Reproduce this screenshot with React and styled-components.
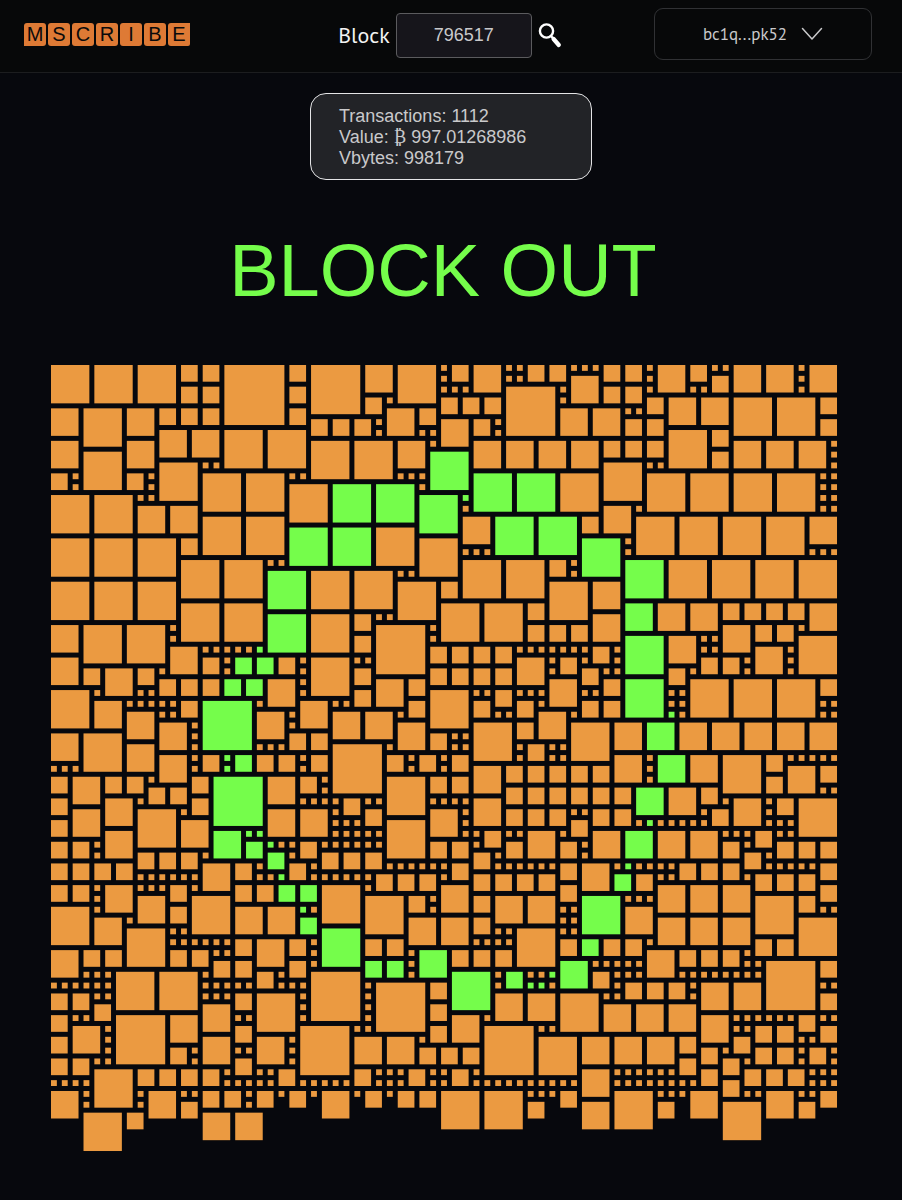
import React from "react";
import styled, { createGlobalStyle } from "styled-components";

const GlobalStyle = createGlobalStyle`
  *, *::before, *::after { box-sizing: border-box; }
  body {
    margin: 0;
    background: #07080d;
    color: #c9c9cb;
    font-family: "Liberation Sans", Arial, sans-serif;
  }
`;

const Page = styled.div`
  min-height: 100vh;
  padding-bottom: 40px;
`;

const Header = styled.header`
  display: grid;
  grid-template-columns: 1fr auto 1fr;
  align-items: center;
  padding: 8px 30px 12px 24px;
  background: #070809;
  border-bottom: 1px solid #1c1d1f;
`;

const Logo = styled.a`
  display: flex;
  gap: 2px;
  justify-self: start;
  text-decoration: none;
`;

const Tile = styled.span`
  display: flex;
  align-items: center;
  justify-content: center;
  width: 22px;
  height: 23px;
  border-radius: ${(p) => p.$corners || "3px"};
  background: #de7a35;
  color: #0a0a0b;
  font-size: 20px;
  line-height: 23px;
`;

const Search = styled.form`
  display: flex;
  align-items: center;
  gap: 6px;
  padding: 2px 0 0 4px;
`;

const SearchLabel = styled.label`
  color: #f2f2f2;
  font-family: "PT Sans", "Noto Sans", sans-serif;
  font-size: 22px;
  line-height: 28px;
`;

const BlockInput = styled.input`
  width: 136px;
  height: 45px;
  padding: 0;
  border: 1px solid #5b5b5e;
  border-radius: 4px;
  background: #16151b;
  color: #c9c9cb;
  font-family: inherit;
  font-size: 18px;
  text-align: center;
`;

const IconButton = styled.button`
  display: flex;
  padding: 0;
  border: 0;
  background: none;
  color: #fff;
  cursor: pointer;
`;

const Wallet = styled.button`
  display: flex;
  align-items: center;
  justify-content: center;
  gap: 14px;
  justify-self: end;
  width: 218px;
  height: 52px;
  border: 1px solid #303134;
  border-radius: 9px;
  background: transparent;
  color: #c9c9cb;
  font-family: "PT Sans", "Noto Sans", sans-serif;
  font-size: 17px;
  cursor: pointer;
`;

const Stats = styled.section`
  width: 282px;
  margin: 20px auto 0;
  padding: 12px 28px 10px;
  border: 1px solid #e4e4e6;
  border-radius: 16px;
  background: #222327;
  font-size: 18px;
  line-height: 21px;
`;

const StatLine = styled.p`
  margin: 0;
`;

const Coin = styled.span`
  font-family: "Liberation Serif", serif;
`;

const Title = styled.h1`
  margin: 49px 0 52px;
  padding-right: 16px;
  color: #75fd4b;
  font-size: 74px;
  font-weight: 400;
  line-height: 84px;
  text-align: center;
`;

const Field = styled.main`
  padding: 0 60px 0 51px;
`;

const Mosaic = styled.svg`
  display: block;
  width: 100%;
`;

const Cell = styled.rect`
  fill: ${(p) => (p.$lit ? "#75fd4b" : "#eb9a41")};
`;

const COLUMNS = 73;
const GAP = 0.46;

// One string per grid row: the sizes of the squares that start in that row,
// taken left to right over the cells still free. Letters a-e are lit squares
// of size 1-5, a dot is an empty cell.
const ROWS = [
  "4442262 5341231122 11122132113313",
  "1113121",
  "22211151221111",
  "212221233442",
  "3432222323311",
  "2221321222",
  "3344111142",
  "33443133332223331",
  "4d21",
  "4114111",
  "21214411111dd4444411",
  "114dd111",
  "4411da11",
  "3313111",
  "443dd244443",
  "dd4",
  "44424d1",
  "1111111",
  "44114421d4444",
  "d44111",
  "4444243",
  "",
  "44442c3322223",
  "d42113",
  "3441512223221",
  "121d3114",
  "311111a2222 1111111 21 11 31",
  "321bb21411312112211",
  "2321112222212112111",
  "222bb313232d4442",
  "41111241121111111",
  "3111112e13112221221111",
  "311313311131a111",
  "31134243c33333",
  "34122211",
  "3111151111211",
  "312ab221221212111 31c342 11111",
  "1111a111322222132",
  "232212e32142212",
  "221222222c3211",
  "231211112111111313124",
  "3413312312221122121",
  "231114121a11111111",
  "3caa11111 112113 1 3c33 111211",
  "221ba112111111221221212 22",
  "12221b12222112 1",
  "22223212 111111 1 2 111111 2 31a1111222 11111 2",
  "111111 11a 111111 222 1 2222 b2 11 1 222",
  "2213111212 2bb4132 3332",
  "134421233d11142",
  "412 33a11 11 311",
  "31b33211 3334",
  "411d11411",
  "111111 2321 22 1111 2b221 22",
  "322221111c222 3 2221",
  "2221bb1c11111 1152",
  "11144121 51d1b11a 2111 11111111",
  "111111 11111 111 1 52 1aa1 1222133 11",
  "221111124113341112",
  "23112333",
  "2115311113 13 111111 211",
  "31251125 111 1222",
  "2133133143332211",
  "1211112222122121",
  "221112122111",
  "4222211122111211213 111111 2222111",
  "1111 11111 11111 111 11 1111111111 11111111 2 111",
  "31131122121213121224411124111311 3112",
  "1121....2.32.42",
  "4233",
];

function layout(rows) {
  const taken = new Set();
  const cells = [];
  rows.forEach((row, y) => {
    let x = 0;
    for (const mark of row.replace(/ /g, "")) {
      while (taken.has(y * COLUMNS + x)) x += 1;
      if (mark === ".") {
        x += 1;
        continue;
      }
      const lit = mark >= "a";
      const size = lit ? mark.charCodeAt(0) - 96 : Number(mark);
      for (let dy = 0; dy < size; dy += 1) {
        for (let dx = 0; dx < size; dx += 1) {
          taken.add((y + dy) * COLUMNS + x + dx);
        }
      }
      cells.push({ x, y, size, lit });
      x += size;
    }
  });
  return cells;
}

const CELLS = layout(ROWS);

const LETTERS = [
  { letter: "M", corners: "3px 3px 3px 0" },
  { letter: "S" },
  { letter: "C" },
  { letter: "R" },
  { letter: "I" },
  { letter: "B" },
  { letter: "E", corners: "3px 0 2px 3px" },
];

function SearchIcon() {
  return (
    <svg width="24" height="26" viewBox="0 0 24 26" fill="none" stroke="currentColor" aria-hidden="true">
      <circle cx="8.5" cy="9" r="6.6" strokeWidth="2.4" />
      <path d="M13 14l3 3.4" strokeWidth="2.4" />
      <path d="M15.6 17l5.2 6" strokeWidth="4.2" strokeLinecap="round" />
    </svg>
  );
}

function Chevron() {
  return (
    <svg width="22" height="14" viewBox="0 0 22 14" fill="none" stroke="currentColor" aria-hidden="true">
      <path d="M1.5 1.5L11 12l9.500-10.500" strokeWidth="1.5" strokeLinecap="round" strokeLinejoin="round" />
    </svg>
  );
}

export default function App() {
  return (
    <Page>
      <GlobalStyle />
      <Header>
        <Logo href="#" aria-label="MSCRIBE">
          {LETTERS.map(({ letter, corners }) => (
            <Tile key={letter} $corners={corners}>{letter}</Tile>
          ))}
        </Logo>
        <Search onSubmit={(e) => e.preventDefault()}>
          <SearchLabel htmlFor="block">Block</SearchLabel>
          <BlockInput id="block" type="text" inputMode="numeric" defaultValue="796517" />
          <IconButton type="submit" aria-label="Search">
            <SearchIcon />
          </IconButton>
        </Search>
        <Wallet type="button">
          bc1q...pk52
          <Chevron />
        </Wallet>
      </Header>
      <Stats>
        <StatLine>Transactions: 1112</StatLine>
        <StatLine>Value: <Coin>₿</Coin> 997.01268986</StatLine>
        <StatLine>Vbytes: 998179</StatLine>
      </Stats>
      <Title>BLOCK OUT</Title>
      <Field>
        <Mosaic viewBox={`0 0 ${COLUMNS} ${COLUMNS}`} role="img" aria-label="Block transactions">
          {CELLS.map(({ x, y, size, lit }) => (
            <Cell key={`${x}-${y}`} x={x} y={y} width={size - GAP} height={size - GAP} $lit={lit} />
          ))}
        </Mosaic>
      </Field>
    </Page>
  );
}
